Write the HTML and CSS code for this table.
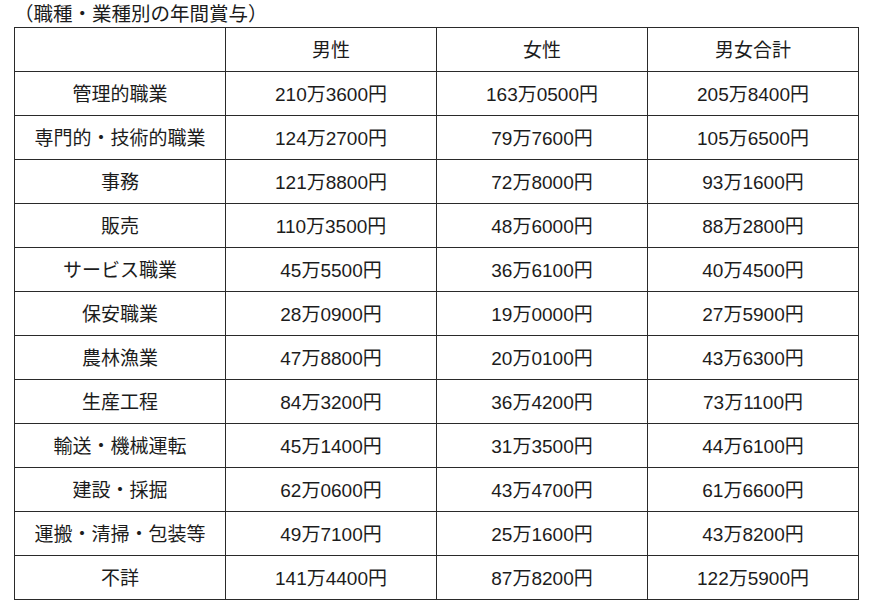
FILE: index.html
```html
<!DOCTYPE html>
<html lang="ja">
<head>
<meta charset="utf-8">
<link rel="stylesheet" href="styles.css">
</head>
<body>
<p class="caption">（職種・業種別の年間賞与）</p>
<table class="bonus">
  <thead>
    <tr><th></th><th>男性</th><th>女性</th><th>男女合計</th></tr>
  </thead>
  <tbody>
    <tr><td>管理的職業</td><td>210万3600円</td><td>163万0500円</td><td>205万8400円</td></tr>
    <tr><td>専門的・技術的職業</td><td>124万2700円</td><td>79万7600円</td><td>105万6500円</td></tr>
    <tr><td>事務</td><td>121万8800円</td><td>72万8000円</td><td>93万1600円</td></tr>
    <tr><td>販売</td><td>110万3500円</td><td>48万6000円</td><td>88万2800円</td></tr>
    <tr><td>サービス職業</td><td>45万5500円</td><td>36万6100円</td><td>40万4500円</td></tr>
    <tr><td>保安職業</td><td>28万0900円</td><td>19万0000円</td><td>27万5900円</td></tr>
    <tr><td>農林漁業</td><td>47万8800円</td><td>20万0100円</td><td>43万6300円</td></tr>
    <tr><td>生産工程</td><td>84万3200円</td><td>36万4200円</td><td>73万1100円</td></tr>
    <tr><td>輸送・機械運転</td><td>45万1400円</td><td>31万3500円</td><td>44万6100円</td></tr>
    <tr><td>建設・採掘</td><td>62万0600円</td><td>43万4700円</td><td>61万6600円</td></tr>
    <tr><td>運搬・清掃・包装等</td><td>49万7100円</td><td>25万1600円</td><td>43万8200円</td></tr>
    <tr><td>不詳</td><td>141万4400円</td><td>87万8200円</td><td>122万5900円</td></tr>
  </tbody>
</table>
</body>
</html>
```

FILE: styles.css
```css
html, body {
  margin: 0;
  padding: 0;
  background: #ffffff;
}
body {
  font-family: "Liberation Sans", "Noto Sans CJK JP", sans-serif;
  color: #1c1c1c;
  padding-left: 14px;
}
.caption {
  margin: 0;
  padding-top: 1px;
  font-size: 19.5px;
  line-height: 27px;
  height: 26px;
}
.bonus {
  border-collapse: collapse;
  table-layout: fixed;
  width: 845px;
  font-size: 19px;
}
.bonus th,
.bonus td {
  border: 1px solid #2a2a2a;
  height: 41px;
  padding: 2px 0 0 0;
  text-align: center;
  vertical-align: middle;
  font-weight: normal;
  line-height: 24px;
}
```
